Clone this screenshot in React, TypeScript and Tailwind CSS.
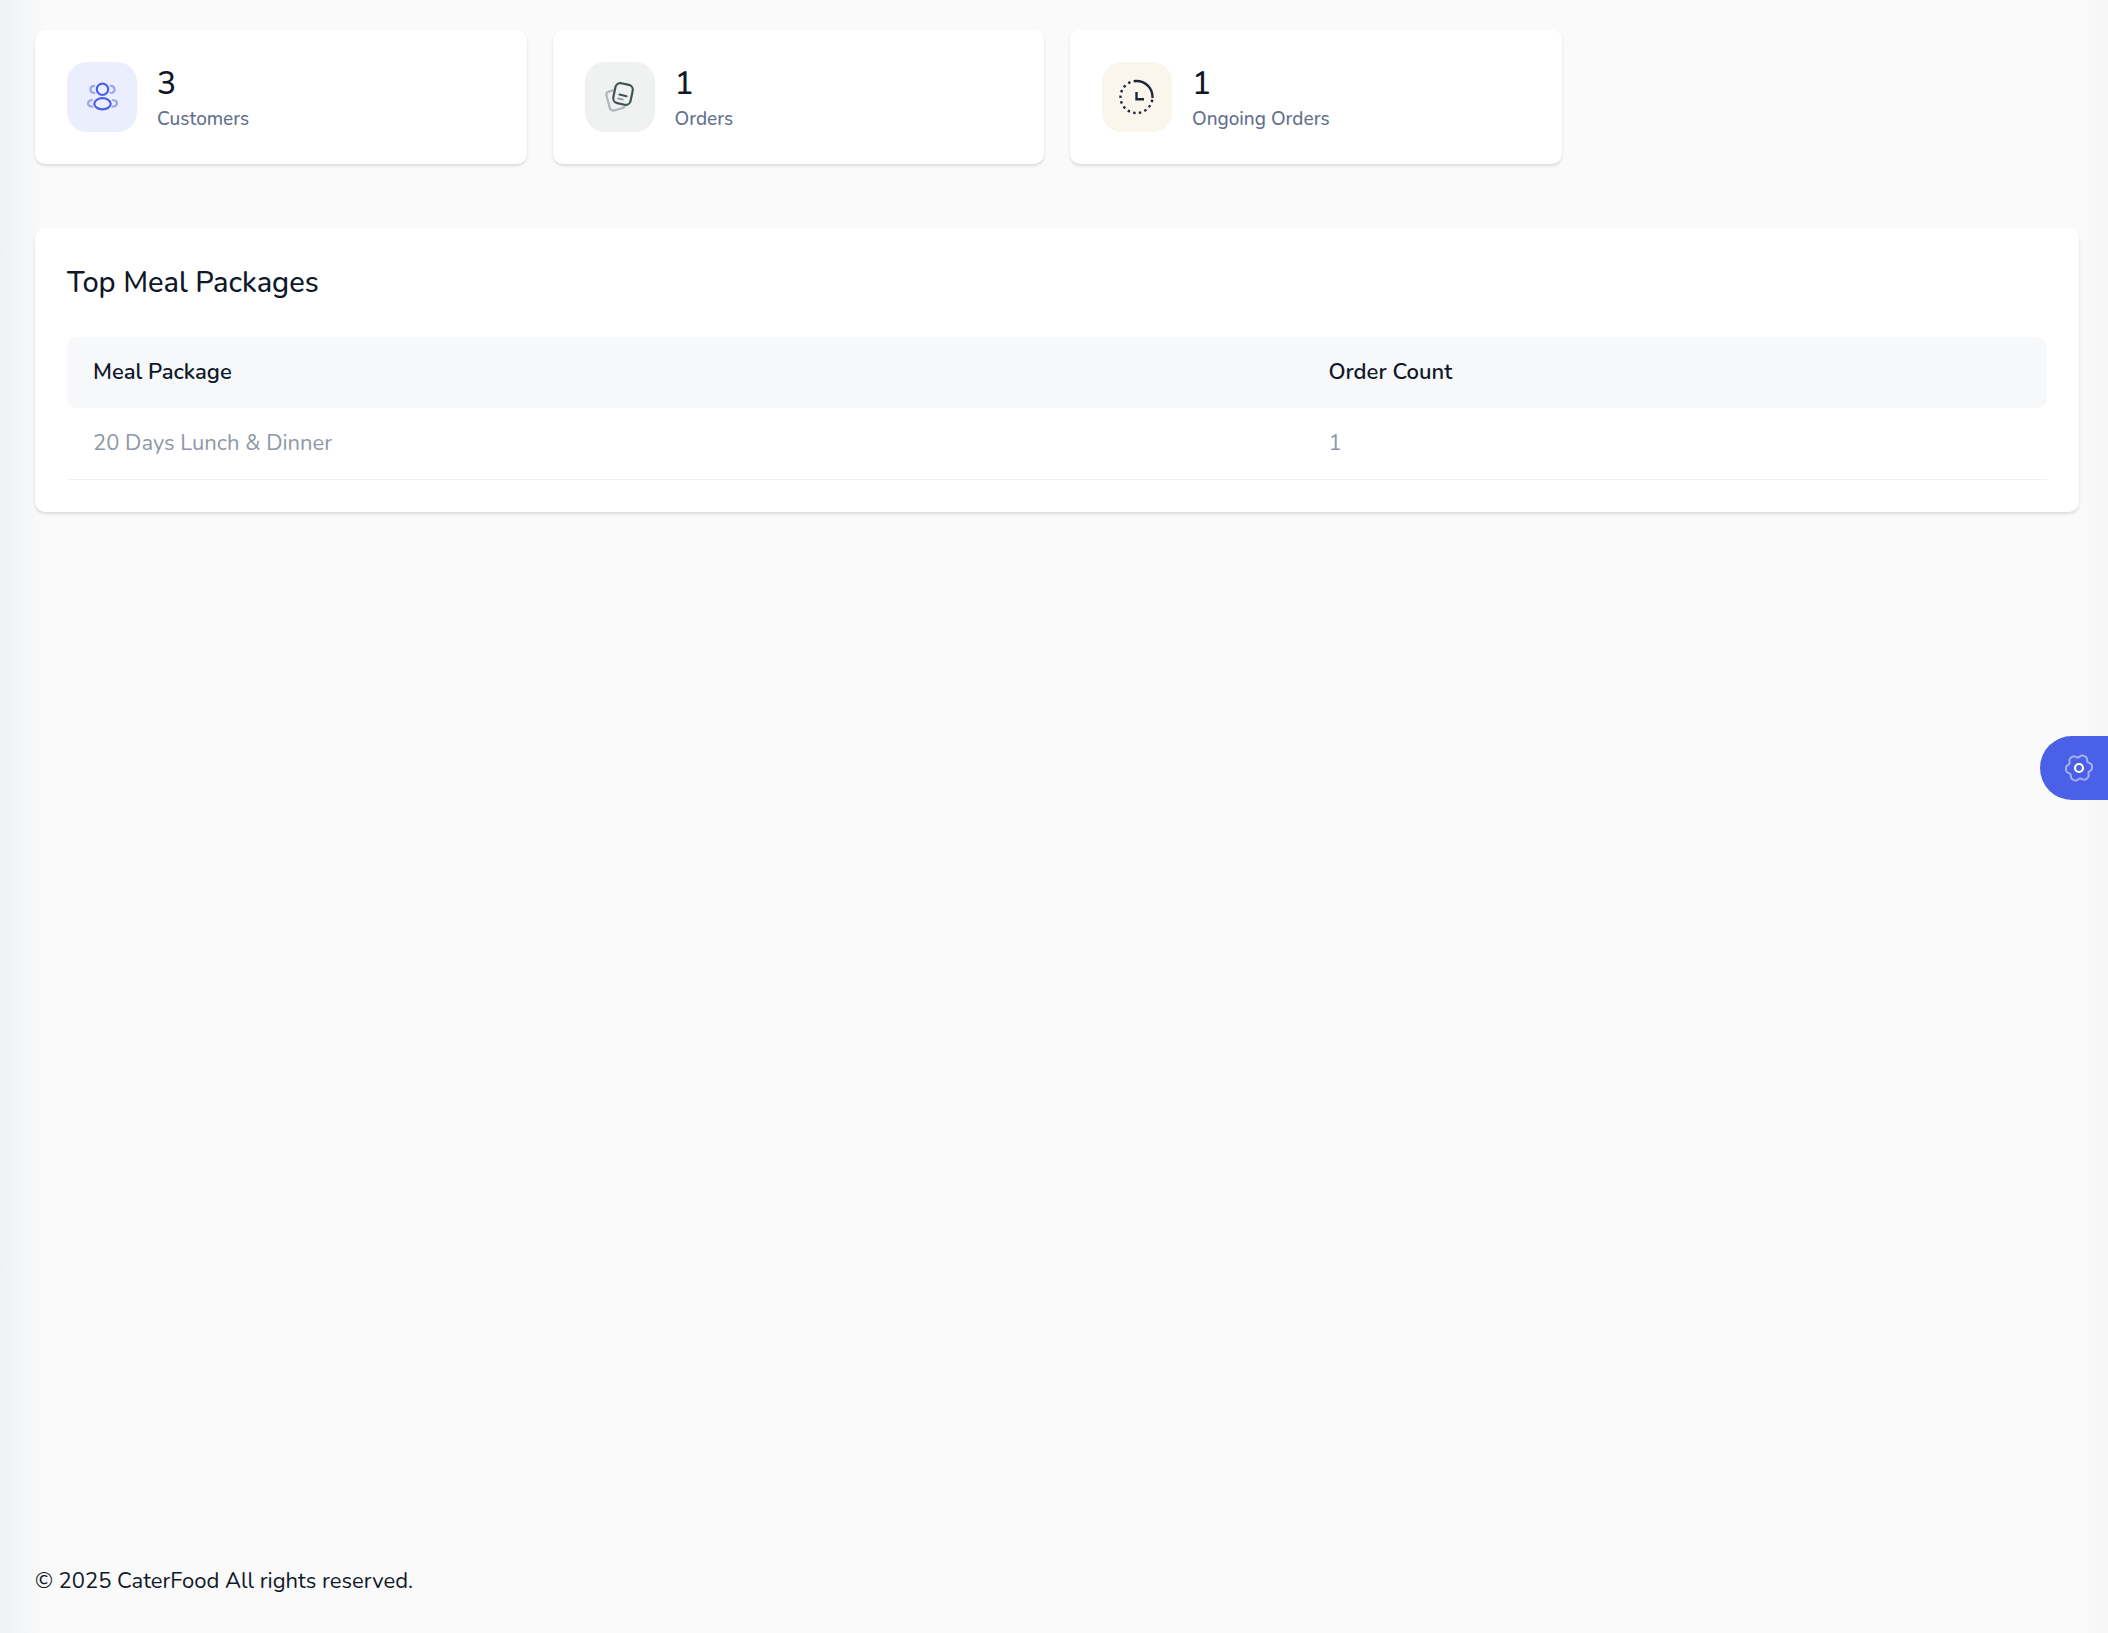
import type { ReactNode } from 'react';

interface Stat {
    label: string;
    value: number;
    tint: string;
    icon: ReactNode;
}

interface MealPackage {
    name: string;
    orderCount: number;
}

// Six soft lobes around the centre of a 30x30 box
const gearPoints = Array.from({ length: 120 }, (_, i) => {
    const angle = (i * 3 * Math.PI) / 180;
    const radius = 12.1 + 1.3 * Math.cos(6 * angle) - 0.3 * Math.cos(12 * angle);
    return `${(15 + radius * Math.cos(angle - 0.1)).toFixed(2)},${(15 + radius * Math.sin(angle - 0.1)).toFixed(2)}`;
}).join(' ');

function CustomersIcon() {
    return (
        <svg viewBox="0 0 32 32" className="size-8 text-[#4a60e6]" fill="none" stroke="currentColor" strokeWidth="2.2" aria-hidden="true">
            <circle cx="16.5" cy="8.3" r="5.7" />
            <ellipse cx="16.5" cy="22.8" rx="8.2" ry="5.6" />
            <g opacity="0.5" strokeLinecap="round">
                <path d="M8.4 12C6 11.8 4.5 10.3 4.5 8.4S6 5 8.2 4.9" />
                <path d="M24.6 12c2.4-.2 3.9-1.7 3.9-3.6S27 5 24.8 4.9" />
                <path d="M6.3 25.6C3.7 25.3 2 24 2 22.3s1.4-3 3.9-3.3" />
                <path d="M26.7 25.6c2.6-.3 4.3-1.6 4.3-3.3s-1.4-3-3.9-3.3" />
            </g>
        </svg>
    );
}

function OrdersIcon() {
    return (
        <svg viewBox="0 0 32 32" className="size-8 text-[#3f5452]" fill="none" stroke="currentColor" strokeWidth="2.2" strokeLinecap="round" aria-hidden="true">
            <rect x="10.2" y="2.8" width="17.6" height="20.4" rx="5" transform="rotate(12 19 13)" />
            <path d="M15.5 13.5l7 1.7" />
            <path d="M14.3 17.5l4.3 1" opacity="0.5" />
            <path
                d="M9.5 9.3l-4.6 1.3c-2 .6-2.9 2-2.4 4l3.2 12c.5 2.2 2.2 3.3 4.4 2.8l7-1.9c1.8-.5 3.2-1.4 4-2.7"
                stroke="#5d7286"
                opacity="0.45"
            />
        </svg>
    );
}

function OngoingIcon() {
    return (
        <svg viewBox="0 0 36 36" className="size-9 text-[#1b2637]" fill="none" stroke="currentColor" strokeWidth="2.4" aria-hidden="true">
            <path d="M17.5 2A16 16 0 0 1 33.5 18" strokeLinecap="round" />
            <path
                d="M33.5 18A16 16 0 1 1 17.5 2"
                pathLength="130"
                strokeDasharray="4.2 5.8"
                strokeDashoffset="-5"
            />
            <path d="M17.5 13v7.3h7.5" />
        </svg>
    );
}

function GearIcon() {
    return (
        <svg viewBox="0 0 30 30" className="size-[30px]" fill="none" stroke="currentColor" aria-hidden="true">
            <polygon points={gearPoints} strokeWidth="2" strokeLinejoin="round" opacity="0.5" />
            <circle cx="15" cy="15" r="4" strokeWidth="2.2" />
        </svg>
    );
}

const stats: Stat[] = [
    { label: 'Customers', value: 3, tint: 'bg-[#ebeffd]', icon: <CustomersIcon /> },
    { label: 'Orders', value: 1, tint: 'bg-[#f0f1f1]', icon: <OrdersIcon /> },
    { label: 'Ongoing Orders', value: 1, tint: 'bg-[#faf6ee]', icon: <OngoingIcon /> },
];

const packages: MealPackage[] = [{ name: '20 Days Lunch & Dinner', orderCount: 1 }];

function StatCard({ stat }: { stat: Stat }) {
    return (
        <div className="flex items-center gap-5 rounded-[10px] bg-white p-8 shadow-[0_2px_3px_rgba(0,0,0,0.12)]">
            <div className={`flex size-[70px] shrink-0 items-center justify-center rounded-[20px] ${stat.tint}`}>
                {stat.icon}
            </div>
            <div>
                <p className="text-[32px] leading-[44px] font-medium">{stat.value}</p>
                <p className="text-[19px] leading-[26px] font-medium text-[#64708f]">{stat.label}</p>
            </div>
        </div>
    );
}

export default function App() {
    return (
        <div className="relative flex min-h-screen flex-col bg-[#fafafa] pr-[29px] pl-[35px] font-['Nunito','Lato',sans-serif] text-[#0f1829]">
            {/* Soft shading along both window edges */}
            <div className="pointer-events-none absolute inset-y-0 left-0 w-11 bg-linear-to-r from-[#eff1f4] to-[#fafafa]" />
            <div className="pointer-events-none absolute inset-y-0 right-0 w-7 bg-linear-to-l from-[#f6f6f7] to-[#fafafa]" />

            <main className="relative flex-1 pt-[30px]">
                <div className="grid grid-cols-4 gap-[26px]">
                    {stats.map((stat) => (
                        <StatCard key={stat.label} stat={stat} />
                    ))}
                </div>

                <section className="mt-16 rounded-[10px] bg-white p-8 shadow-[0_2px_3px_rgba(0,0,0,0.12)]">
                    <h2 className="mb-8 text-[29px] leading-[45px] font-medium">Top Meal Packages</h2>
                    <table className="w-full table-fixed border-separate border-spacing-0 text-left text-[22px] leading-[31px]">
                        <thead>
                            <tr className="bg-[#f7f8fa]">
                                <th className="w-[62.4%] rounded-l-[10px] px-[26px] py-5 font-semibold">Meal Package</th>
                                <th className="rounded-r-[10px] px-[26px] py-5 font-semibold">Order Count</th>
                            </tr>
                        </thead>
                        <tbody>
                            {packages.map((pkg) => (
                                <tr key={pkg.name} className="text-[#8e97a6]">
                                    <td className="border-b border-[#f1f1f3] px-[26px] py-5">{pkg.name}</td>
                                    <td className="border-b border-[#f1f1f3] px-[26px] py-5">{pkg.orderCount}</td>
                                </tr>
                            ))}
                        </tbody>
                    </table>
                </section>
            </main>

            <footer className="relative pb-9 text-[22px] leading-8">© 2025 CaterFood All rights reserved.</footer>

            <button
                type="button"
                aria-label="Settings"
                className="fixed top-[736px] right-0 flex h-16 w-[68px] items-center justify-center rounded-l-full bg-[#4a60e6] pl-2.5 text-white"
            >
                <GearIcon />
            </button>
        </div>
    );
}
